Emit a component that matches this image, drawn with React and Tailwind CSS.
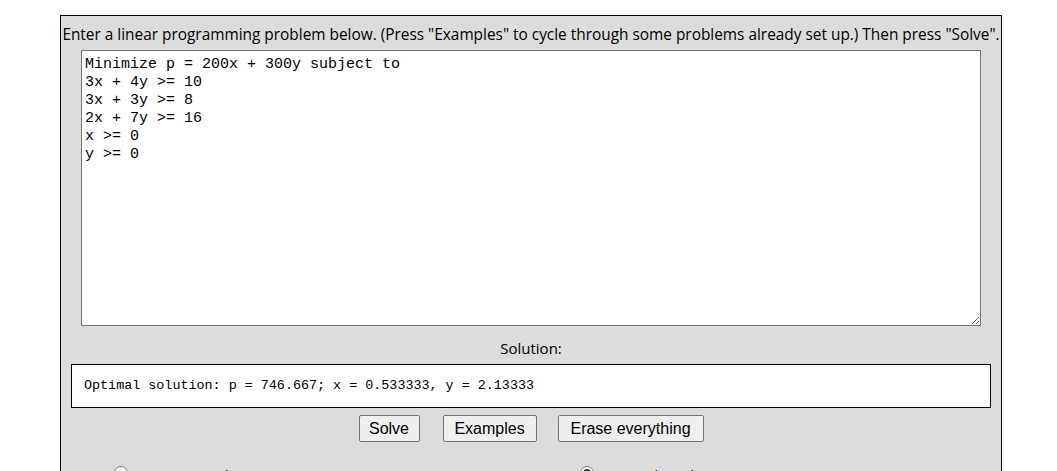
import React from "react";

const problem = `Minimize p = 200x + 300y subject to
3x + 4y >= 10
3x + 3y >= 8
2x + 7y >= 16
x >= 0
y >= 0`;

function Radio({ checked, label }) {
  return (
    <div className="flex items-start gap-[8px]">
      <span className="flex h-[14px] w-[14px] shrink-0 items-center justify-center rounded-full border border-[#767676] bg-white">
        {checked && <span className="h-[8px] w-[8px] rounded-full bg-[#333]" />}
      </span>
      <span className="leading-[18px]">{label}</span>
    </div>
  );
}

export default function App() {
  return (
    <div className="min-h-[520px] bg-white pt-[15px] text-black">
      <div
        className="ml-[60px] w-[942px] border border-black bg-[#dcdcdc] text-center text-[15px]"
        style={{ fontFamily: '"Open Sans", "Noto Sans", sans-serif' }}
      >
        <div className="h-[34px] whitespace-nowrap text-[15.4px] leading-[38px]">
          Enter a linear programming problem below. (Press "Examples" to cycle through some problems already set up.) Then press "Solve".
        </div>
        <textarea
          className="ml-[20px] block h-[276px] w-[900px] border border-[#767676] bg-white px-[3px] pb-[3px] pt-[5px] text-left text-[15px] leading-[18px] text-black outline-none"
          style={{ fontFamily: '"Liberation Mono", "DejaVu Sans Mono", monospace' }}
          defaultValue={problem}
          spellCheck={false}
        />
        <div className="pb-[4px] pt-[10px] leading-[24px]">Solution:</div>
        <div
          className="ml-[10px] flex h-[44px] w-[920px] items-center border border-black bg-white pl-[12px] text-left text-[13.4px]"
          style={{ fontFamily: '"Liberation Mono", "DejaVu Sans Mono", monospace' }}
        >
          Optimal solution: p = 746.667; x = 0.533333, y = 2.13333
        </div>
        <div
          className="mt-[7px] flex justify-center text-[16px]"
          style={{ fontFamily: '"Liberation Sans", Arial, sans-serif' }}
        >
          <button className="h-[27px] w-[61px] rounded-[2px] border border-[#767676] bg-[#efefef] leading-[25px]">
            Solve
          </button>
          <button className="ml-[23px] h-[27px] w-[94px] rounded-[2px] border border-[#767676] bg-[#efefef] leading-[25px]">
            Examples
          </button>
          <button className="ml-[21px] h-[27px] w-[146px] rounded-[2px] border border-[#767676] bg-[#efefef] leading-[25px]">
            Erase everything
          </button>
        </div>
        <div className="grid grid-cols-2 pb-[30px] pt-[24px] text-left">
          <div className="pl-[53px]">
            <Radio label="Fraction mode" />
          </div>
          <div className="pl-[49px]">
            <Radio checked label="Decimal mode" />
          </div>
        </div>
      </div>
    </div>
  );
}
